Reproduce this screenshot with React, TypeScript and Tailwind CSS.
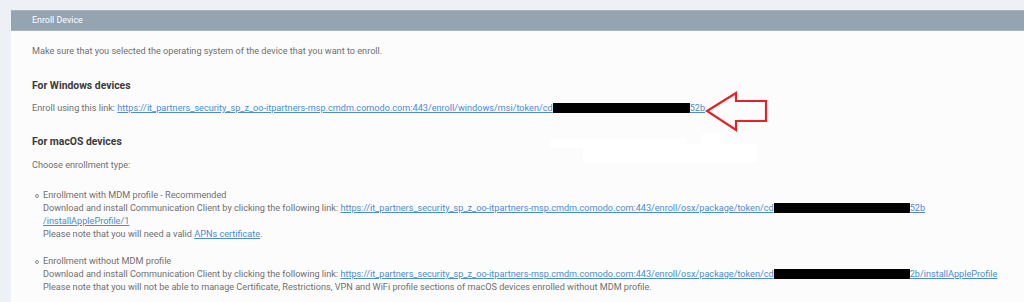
import React from "react";

const font = { fontFamily: "Roboto, 'Noto Sans', Arial, sans-serif" };

function Redact({ w }: { w: number }) {
  return (
    <span
      className="inline-block bg-black align-[-2px] h-[10px]"
      style={{ width: w }}
    />
  );
}

function Bullet() {
  return (
    <span className="w-[11px] shrink-0 flex justify-start pt-[5px] pl-[3px]">
      <span className="w-[4px] h-[4px] rounded-full border border-[#8a8a8a]" />
    </span>
  );
}

const linkCls = "text-[#4c8bd0] underline underline-offset-[1px] decoration-[#4c8bd0]";

export default function App() {
  return (
    <div
      className="w-[1024px] h-[302px] bg-[#edf1f5] overflow-hidden pt-[10px] pl-[11px]"
      style={font}
    >
      <div className="bg-[#fcfcfc] h-full">
        <div className="h-[21px] bg-[#94a4b0] border-t border-b border-t-[#a7b4be] border-b-[#a7b4be] pl-[21px] flex items-center text-white text-[8.9px]">
          Enroll Device
        </div>
        <div className="relative pl-[21px] pt-[14px] text-[9.15px] leading-[13px] text-[#707070]">
          {/* faint white redaction patches */}
          <div className="absolute left-[539px] top-[107px] w-[137px] h-[10px] bg-white" />
          <div className="absolute left-[572px] top-[113px] w-[174px] h-[18px] bg-white" />
          <div className="absolute left-[691px] top-[103px] w-[20px] h-[10px] bg-white" />

          <p>Make sure that you selected the operating system of the device that you want to enroll.</p>

          <h3 className="mt-[21px] text-[10.4px] leading-[14px] font-bold text-[#3a3a3a]">
            For Windows devices
          </h3>
          <p className="mt-[9px] whitespace-nowrap">
            Enroll using this link:{" "}
            <span className={linkCls}>
              https://it_partners_security_sp_z_oo-itpartners-msp.cmdm.comodo.com:443/enroll/windows/msi/token/cd
            </span>
            <Redact w={137} />
            <span className={linkCls}>52b</span>
            <span className="relative inline-block w-0 h-0">
              <svg
                className="absolute left-[0px] top-[-20px]"
                width="64"
                height="42"
                viewBox="0 0 64 42"
              >
                <polygon
                  points="2,20 31,2 31,10 61,10 61,30 31,30 31,39"
                  fill="none"
                  stroke="#e3222b"
                  strokeWidth="2.2"
                  strokeLinejoin="miter"
                />
              </svg>
            </span>
          </p>

          <h3 className="mt-[20px] text-[10.4px] leading-[14px] font-bold text-[#3a3a3a]">
            For macOS devices
          </h3>
          <p className="mt-[10px]">Choose enrollment type:</p>

          <div className="mt-[17px] flex">
            <Bullet />
            <div className="whitespace-nowrap">
              <div>Enrollment with MDM profile - Recommended</div>
              <div>
                Download and install Communication Client by clicking the following link:{" "}
                <span className={linkCls}>
                  https://it_partners_security_sp_z_oo-itpartners-msp.cmdm.comodo.com:443/enroll/osx/package/token/cd
                </span>
                <Redact w={136} />
                <span className={linkCls}>52b</span>
              </div>
              <div>
                <span className={linkCls}>/installAppleProfile/1</span>
              </div>
              <div>
                Please note that you will need a valid <span className={linkCls}>APNs certificate</span>.
              </div>
            </div>
          </div>

          <div className="mt-[14px] flex">
            <Bullet />
            <div className="whitespace-nowrap">
              <div>Enrollment without MDM profile</div>
              <div>
                Download and install Communication Client by clicking the following link:{" "}
                <span className={linkCls}>
                  https://it_partners_security_sp_z_oo-itpartners-msp.cmdm.comodo.com:443/enroll/osx/package/token/cd
                </span>
                <Redact w={136} />
                <span className={linkCls}>2b/installAppleProfile</span>
              </div>
              <div>
                Please note that you will not be able to manage Certificate, Restrictions, VPN and WiFi profile sections of macOS devices enrolled without MDM profile.
              </div>
            </div>
          </div>
        </div>
      </div>
    </div>
  );
}
